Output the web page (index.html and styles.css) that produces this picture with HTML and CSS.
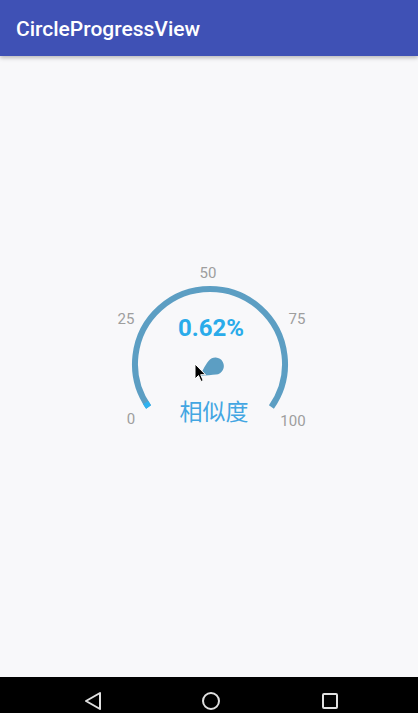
FILE: index.html
```html
<!DOCTYPE html>
<html>
<head>
<meta charset="utf-8">
<link rel="stylesheet" href="styles.css">
</head>
<body>
<div class="app">
  <header class="toolbar"><span class="title">CircleProgressView</span></header>
  <main class="content">
    <svg class="gauge" width="200" height="180" viewBox="0 0 200 180">
      <path d="M38.6 152 A75 75 0 1 1 161.4 152" fill="none" stroke="#5c9ec3" stroke-width="6"/>
      <path d="M38.6 152 A75 75 0 0 1 35.7 147.6" fill="none" stroke="#2fb2f0" stroke-width="6"/>
      <text class="tick" x="98" y="23" text-anchor="middle">50</text>
      <text class="tick" x="16" y="69" text-anchor="middle">25</text>
      <text class="tick" x="187" y="69" text-anchor="middle">75</text>
      <text class="tick" x="21" y="169" text-anchor="middle">0</text>
      <text class="tick" x="183" y="171" text-anchor="middle">100</text>
      <text class="value" x="101" y="81" text-anchor="middle">0.62%</text>
      <text class="label" x="104" y="165" text-anchor="middle">相似度</text>
      <path d="M90 121 Q95 110 98.5 106 A8.5 8.5 0 1 1 106 119.5 Q100 120 90 121 Z" fill="#5c9ec3"/>
      <path d="M85 109 L85 124 L88.5 120.5 L91 126.5 L93.2 125.5 L90.7 119.7 L95.5 119.7 Z" fill="#000" stroke="#fff" stroke-width="1"/>
    </svg>
  </main>
  <nav class="navbar">
    <svg width="418" height="36" viewBox="0 0 418 36">
      <path d="M100 16 L86 24 L100 32 Z" fill="none" stroke="#e0e0e0" stroke-width="2" stroke-linejoin="round"/>
      <circle cx="211" cy="24" r="8" fill="none" stroke="#e0e0e0" stroke-width="2"/>
      <rect x="323" y="17" width="14" height="14" rx="1" fill="none" stroke="#e0e0e0" stroke-width="2"/>
    </svg>
  </nav>
</div>
</body>
</html>
```
FILE: styles.css
```css
html, body {
  margin: 0;
  padding: 0;
  background: #f8f8fa;
  font-family: Roboto, "Noto Sans", "Noto Sans CJK SC", sans-serif;
}
.app {
  width: 418px;
  height: 713px;
  display: flex;
  flex-direction: column;
  overflow: hidden;
}
.toolbar {
  height: 56px;
  background: #3f51b5;
  display: flex;
  align-items: center;
  padding-left: 16px;
  box-shadow: 0 2px 4px rgba(0,0,0,0.25);
  position: relative;
  z-index: 1;
  flex: none;
}
.title {
  color: #fff;
  font-size: 21px;
  font-weight: 500;
  margin-top: 2px;
}
.content {
  flex: 1;
  display: flex;
  justify-content: center;
  align-items: flex-start;
  padding-top: 199px;
  padding-left: 1px;
}
.gauge {
  display: block;
}
.tick {
  font-family: Roboto, sans-serif;
  font-size: 15px;
  fill: #9e9e9e;
}
.value {
  font-family: Roboto, sans-serif;
  font-size: 24px;
  font-weight: 700;
  fill: #2aabea;
}
.label {
  font-family: "Noto Sans CJK SC", sans-serif;
  font-size: 23px;
  fill: #43a6e2;
}
.navbar {
  height: 36px;
  background: #000;
  flex: none;
}
.navbar svg {
  display: block;
}
```
